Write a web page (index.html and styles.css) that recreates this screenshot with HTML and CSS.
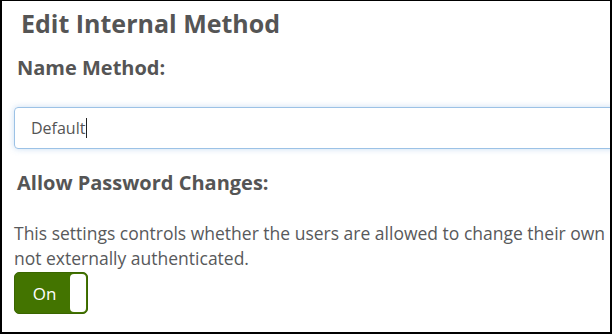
FILE: index.html
```html
<!DOCTYPE html>
<html lang="en">
<head>
    <meta charset="UTF-8">
    <meta name="viewport" content="width=device-width, initial-scale=1.0">
    <title>Edit Internal Method</title>
    <link rel="stylesheet" href="styles.css">
</head>
<body>
    <div class="frame">
        <div class="method-form">
            <h2 class="form-heading">Edit Internal Method</h2>

            <label class="field-label" for="method-name">Name Method:</label>
            <div class="input-box">
                <span class="input-value" id="method-name">Default</span><span class="caret"></span>
            </div>

            <h3 class="field-label section-label">Allow Password Changes:</h3>
            <p class="help-text">This settings controls whether the users are allowed to change their own not externally authenticated.</p>

            <div class="toggle">
                <span class="toggle-text">On</span>
                <span class="toggle-knob"></span>
            </div>
        </div>
    </div>
</body>
</html>
```

FILE: styles.css
```css
body {
    margin: 0;
    background: #ffffff;
    font-family: "Open Sans", "Liberation Sans", Arial, sans-serif;
    color: #555555;
}

.frame {
    box-sizing: border-box;
    width: 612px;
    height: 334px;
    border-style: solid;
    border-color: #000000;
    border-width: 1px 2px 2px 2px;
    overflow: hidden;
}

.method-form {
    width: 820px;
    padding: 0 0 0 12px;
}

.form-heading {
    margin: 0;
    padding: 5px 0 0 7px;
    font-size: 25px;
    font-weight: 700;
    line-height: 34px;
}

.field-label {
    display: block;
    margin: 14px 0 0 3px;
    font-size: 20px;
    font-weight: 700;
    line-height: 27px;
}

.input-box {
    box-sizing: border-box;
    display: flex;
    align-items: center;
    margin-top: 26px;
    height: 42px;
    padding-left: 16px;
    border: 1px solid #9cc2e6;
    border-radius: 4px;
    box-shadow: 0 0 6px rgba(102, 160, 220, 0.35);
    font-size: 16px;
}

.caret {
    display: inline-block;
    width: 1px;
    height: 20px;
    margin-left: 1px;
    background: #222222;
}

.section-label {
    margin-top: 20px;
}

.help-text {
    margin: 25px 0 0 0;
    font-size: 17.5px;
    line-height: 25px;
    color: #58595b;
    max-width: 594px;
}

.toggle {
    box-sizing: border-box;
    display: flex;
    align-items: center;
    width: 74px;
    height: 42px;
    margin-top: 1px;
    background: #437400;
    border: 1px solid #3a6600;
    border-radius: 5px;
    padding: 1px;
}

.toggle-text {
    flex: 1;
    text-align: center;
    color: #ffffff;
    font-size: 17px;
    padding-left: 3px;
}

.toggle-knob {
    width: 16px;
    height: 38px;
    background: #ffffff;
    border-radius: 4px;
}
```
